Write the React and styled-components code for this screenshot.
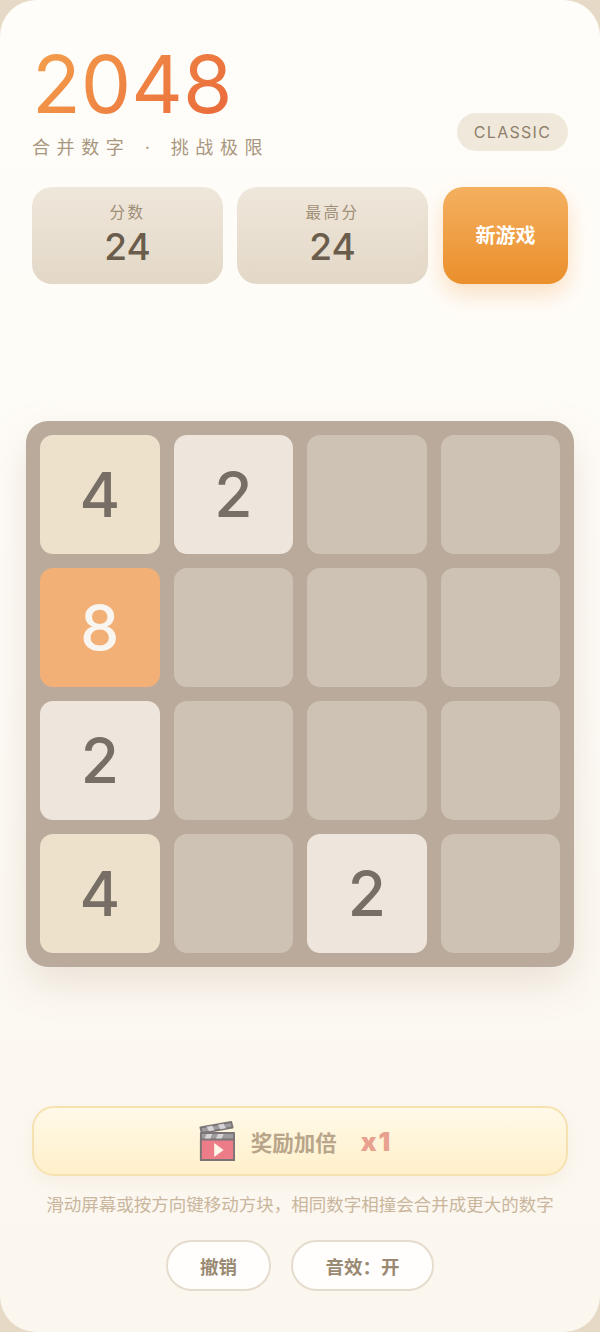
import React from "react";
import styled, { createGlobalStyle } from "styled-components";

const Global = createGlobalStyle`
  html, body { margin: 0; padding: 0; height: 1332px; background: #e6d9c6; overflow: hidden; }
  * { box-sizing: border-box; }
  #root { height: 1332px; }
`;
const FONT = `Inter, "Noto Sans CJK SC", sans-serif`;

const Page = styled.div`
  height: 1332px; width: 600px; display: flex; flex-direction: column;
  padding: 0 32px 41px; border-radius: 36px;
  background: linear-gradient(180deg, #fffdf9 0%, #fefbf6 50%, #fbf6ee 100%);
  font-family: ${FONT};
`;
const Header = styled.header`
  display: flex; justify-content: space-between; align-items: flex-end;
  padding-top: 38px;
`;
const TitleBlock = styled.div`display: flex; flex-direction: column;`;
const Title = styled.h1`
  margin: 0; font-size: 80px; line-height: 92px; font-weight: 400; letter-spacing: 0;
  background: linear-gradient(135deg, #f4a24c 0%, #e9663a 100%);
  -webkit-background-clip: text; background-clip: text; color: transparent;
  width: max-content;
`;
const Subtitle = styled.p`
  margin: 6px 0 0; font-size: 18px; line-height: 24px; letter-spacing: 6.6px; word-spacing: 2.6px; color: #a8977f; white-space: pre;
`;
const Badge = styled.div`
  width: 111px; height: 38px; margin-bottom: 9px; border-radius: 19px; background: #f0e8da;
  display: flex; align-items: center; justify-content: center;
  font-size: 16px; letter-spacing: 1.3px; color: #8f806c;
`;
const ScoreRow = styled.div`display: flex; gap: 14px; margin-top: 27px; height: 97px;`;
const ScoreCard = styled.div`
  flex: 0 0 191px; border-radius: 20px;
  background: linear-gradient(180deg, #efe7db 0%, #e3d8c7 100%);
  display: flex; flex-direction: column; align-items: center; padding-top: 16px;
`;
const ScoreLabel = styled.div`font-size: 15.5px; line-height: 19px; letter-spacing: 2.5px; color: #a08f78;`;
const ScoreValue = styled.div`font-size: 37px; line-height: 40px; margin-top: 5px; font-weight: 500; color: #6b5d4c;`;
const NewGame = styled.button`
  flex: 0 0 125px; margin-left: 1px; border: 0; border-radius: 20px; color: #fff;
  font: 700 20px ${FONT}; padding: 0 0 2px;
  background: linear-gradient(180deg, #f4b05f 0%, #ea8f2c 100%);
  box-shadow: 0 10px 22px rgba(238, 150, 60, 0.28);
`;
const BoardArea = styled.main`flex: 1; display: flex; align-items: center; justify-content: center; margin: 0 -6px 2px;`;
const Board = styled.div`
  width: 548px; height: 546px; padding: 14px; border-radius: 22px; background: #b9aa9b;
  display: grid; grid-template-columns: repeat(4, 1fr); grid-template-rows: repeat(4, 1fr); gap: 14px;
  box-shadow: 0 16px 40px rgba(150, 120, 90, 0.18);
`;
const TILE = {
  0: ["#cdc2b3", "transparent"],
  2: ["#eee6dd", "#776e65"],
  4: ["#ede1cb", "#776e65"],
  8: ["#f2b076", "#f9f6f2"],
};
const Tile = styled.div`
  border-radius: 13px; display: flex; align-items: center; justify-content: center;
  font-size: 62px; font-weight: 500; color: ${(p) => TILE[p.$v][1]}; background: ${(p) => TILE[p.$v][0]};
`;
const Reward = styled.button`
  height: 70px; padding: 0 8px 0 0; border: 2px solid #f5e2b0; border-radius: 22px;
  background: linear-gradient(180deg, #fff9e8 0%, #fff0ca 100%);
  display: flex; align-items: center; justify-content: center; font-family: ${FONT};
  box-shadow: 0 6px 16px rgba(200, 170, 120, 0.1);
`;
const ClapIcon = styled.svg`width: 36px; height: 40px; margin: 0 16px 0 -1px; opacity: 0.85;`;
const RewardText = styled.span`font-size: 21.5px; font-weight: 700; color: #b8a58a;`;
const Multiplier = styled.span`font-size: 26px; font-weight: 900; letter-spacing: 2px; color: #e9a18f; margin-left: 24px;`;
const Hint = styled.p`
  margin: 17px 0 0; text-align: center; font-size: 17.5px; line-height: 24px; color: #c9b69d; white-space: nowrap;
`;
const Actions = styled.div`display: flex; justify-content: center; gap: 20px; margin-top: 23px;`;
const Pill = styled.button`
  height: 51px; width: ${(p) => p.$w}px; border: 2px solid #e6dccd; border-radius: 26px; background: #fffefc;
  font: 700 18.5px ${FONT}; color: #9a8a73; padding: 0;
`;

const grid = [4, 2, 0, 0, 8, 0, 0, 0, 2, 0, 0, 0, 4, 0, 2, 0];

function Clapper() {
  return (
    <ClapIcon viewBox="0 0 38 40" preserveAspectRatio="none">
      <g stroke="#655f66" strokeWidth="2" strokeLinejoin="round">
        <path d="M1.5 6.5 L34 1 L35.5 6.5 L3 12 Z" fill="#8f8d95" />
        <path d="M2 12 H37 V39 H2 Z" fill="#8f8d95" />
        <path d="M2 18.5 H37 V39 H2 Z" fill="#e9687a" />
      </g>
      <path d="M8 5.8 L14 4.8 L16.5 9.3 L10.5 10.3 Z M20 3.8 L26 2.8 L28.5 7.3 L22.5 8.3 Z" fill="#d0cfd6" />
      <path d="M8 13 H14 L12 17.5 H6 Z M20 13 H26 L24 17.5 H18 Z" fill="#d0cfd6" />
      <path d="M16 22 L26 29 L16 36 Z" fill="#fff6ec" />
    </ClapIcon>
  );
}

export default function App() {
  return (
    <Page>
      <Global />
      <Header>
        <TitleBlock>
          <Title>2048</Title>
          <Subtitle>合并数字 · 挑战极限</Subtitle>
        </TitleBlock>
        <Badge>CLASSIC</Badge>
      </Header>
      <ScoreRow>
        <ScoreCard>
          <ScoreLabel>分数</ScoreLabel>
          <ScoreValue>24</ScoreValue>
        </ScoreCard>
        <ScoreCard>
          <ScoreLabel>最高分</ScoreLabel>
          <ScoreValue>24</ScoreValue>
        </ScoreCard>
        <NewGame>新游戏</NewGame>
      </ScoreRow>
      <BoardArea>
        <Board>
          {grid.map((v, i) => (
            <Tile key={i} $v={v}>{v || ""}</Tile>
          ))}
        </Board>
      </BoardArea>
      <Reward>
        <Clapper />
        <RewardText>奖励加倍</RewardText>
        <Multiplier>x1</Multiplier>
      </Reward>
      <Hint>滑动屏幕或按方向键移动方块，相同数字相撞会合并成更大的数字</Hint>
      <Actions>
        <Pill $w={105}>撤销</Pill>
        <Pill $w={143}>音效：开</Pill>
      </Actions>
    </Page>
  );
}
